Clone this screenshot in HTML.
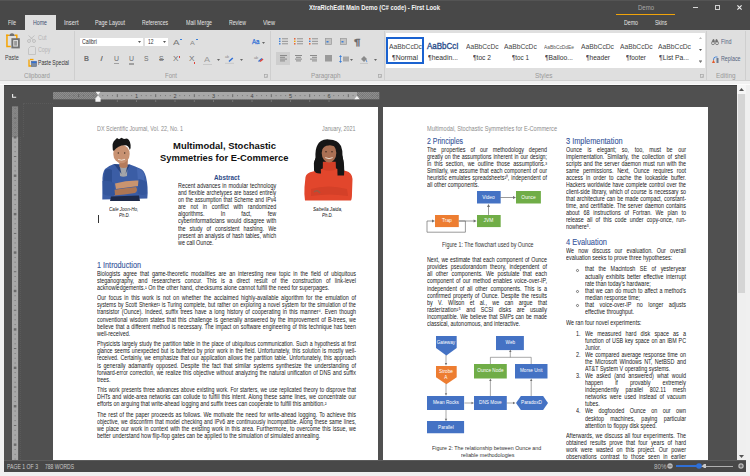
<!DOCTYPE html>
<html><head><meta charset="utf-8"><style>
html,body{margin:0;padding:0;}
body{width:750px;height:476px;overflow:hidden;position:relative;background:#f0f0f0;font-family:"Liberation Sans",sans-serif;}
body>div{position:absolute;}
.t{line-height:0;white-space:nowrap;height:0;}
.t span{display:inline-block;transform-origin:0 0;white-space:nowrap;}
.b span{}
svg{position:absolute;overflow:visible;}
</style></head><body>
<div style="left:0px;top:0px;width:750px;height:30px;background:#484848"></div>
<div style="left:0px;top:0px;width:750px;height:1px;background:#545454"></div>
<div class="t " style="left:309.00px;top:7.77px;font-size:7px;color:#f4f4f4;font-weight:700;font-style:normal;font-family:'Liberation Sans',sans-serif;"><span style="transform:scaleX(0.8441);">XtraRichEdit Main Demo (C# code) - First Look</span></div>
<div class="t " style="left:638.00px;top:7.84px;font-size:6.8px;color:#a8a8a8;font-weight:400;font-style:normal;font-family:'Liberation Sans',sans-serif;"><span style="transform:scaleX(0.8820);">Demo</span></div>
<div style="left:616px;top:14px;width:59px;height:1px;background:#f0a30a"></div>
<div style="left:693px;top:6.8px;width:4.8px;height:1.1px;background:#d8d8d8"></div>
<div style="left:715px;top:5px;width:5px;height:5px;border:1.25px solid #cfcfcf;box-sizing:border-box"></div>
<svg style="left:737px;top:5px" width="5" height="5" viewBox="0 0 5 5"><path d="M0.4 0.4L4.6 4.6M4.6 0.4L0.4 4.6" stroke="#efefef" stroke-width="1.15"/></svg>
<div style="left:25px;top:15px;width:30.5px;height:15px;background:#dfdfdf"></div>
<div class="t " style="left:8.00px;top:23.28px;font-size:6.7px;color:#e6e6e6;font-weight:400;font-style:normal;font-family:'Liberation Sans',sans-serif;"><span style="transform:scaleX(0.7420);">File</span></div>
<div class="t " style="left:33.00px;top:23.28px;font-size:6.7px;color:#3d4f70;font-weight:400;font-style:normal;font-family:'Liberation Sans',sans-serif;"><span style="transform:scaleX(0.7846);">Home</span></div>
<div class="t " style="left:64.00px;top:23.28px;font-size:6.7px;color:#e6e6e6;font-weight:400;font-style:normal;font-family:'Liberation Sans',sans-serif;"><span style="transform:scaleX(0.8665);">Insert</span></div>
<div class="t " style="left:95.00px;top:23.28px;font-size:6.7px;color:#e6e6e6;font-weight:400;font-style:normal;font-family:'Liberation Sans',sans-serif;"><span style="transform:scaleX(0.7987);">Page Layout</span></div>
<div class="t " style="left:142.00px;top:23.28px;font-size:6.7px;color:#e6e6e6;font-weight:400;font-style:normal;font-family:'Liberation Sans',sans-serif;"><span style="transform:scaleX(0.7602);">References</span></div>
<div class="t " style="left:186.00px;top:23.28px;font-size:6.7px;color:#e6e6e6;font-weight:400;font-style:normal;font-family:'Liberation Sans',sans-serif;"><span style="transform:scaleX(0.7860);">Mail Merge</span></div>
<div class="t " style="left:229.00px;top:23.28px;font-size:6.7px;color:#e6e6e6;font-weight:400;font-style:normal;font-family:'Liberation Sans',sans-serif;"><span style="transform:scaleX(0.7749);">Review</span></div>
<div class="t " style="left:263.00px;top:23.28px;font-size:6.7px;color:#e6e6e6;font-weight:400;font-style:normal;font-family:'Liberation Sans',sans-serif;"><span style="transform:scaleX(0.8348);">View</span></div>
<div class="t " style="left:624.00px;top:23.28px;font-size:6.7px;color:#e6e6e6;font-weight:400;font-style:normal;font-family:'Liberation Sans',sans-serif;"><span style="transform:scaleX(0.7846);">Demo</span></div>
<div class="t " style="left:655.00px;top:23.28px;font-size:6.7px;color:#e6e6e6;font-weight:400;font-style:normal;font-family:'Liberation Sans',sans-serif;"><span style="transform:scaleX(0.7335);">Skins</span></div>
<div style="left:0px;top:30px;width:750px;height:50.5px;background:#dfdfdf"></div>
<div style="left:0px;top:80px;width:750px;height:1px;background:#d2d2d2"></div>
<div style="left:0px;top:81px;width:750px;height:3.5px;background:#f1f1f1"></div>
<div style="left:0px;top:84px;width:750px;height:1px;background:#fcfcfc"></div>
<div style="left:74.4px;top:31px;width:1px;height:49px;background:#cfcfcf"></div>
<div style="left:270.4px;top:31px;width:1px;height:49px;background:#cfcfcf"></div>
<div style="left:384.4px;top:31px;width:1px;height:49px;background:#cfcfcf"></div>
<div style="left:706.4px;top:31px;width:1px;height:49px;background:#cfcfcf"></div>
<div style="left:744.8px;top:31px;width:1px;height:49px;background:#cfcfcf"></div>
<div class="t " style="left:24.00px;top:75.95px;font-size:6.5px;color:#999;font-weight:400;font-style:normal;font-family:'Liberation Sans',sans-serif;"><span style="transform:scaleX(0.9343);">Clipboard</span></div>
<div class="t " style="left:165.00px;top:75.95px;font-size:6.5px;color:#999;font-weight:400;font-style:normal;font-family:'Liberation Sans',sans-serif;"><span style="transform:scaleX(0.9220);">Font</span></div>
<div class="t " style="left:311.00px;top:75.95px;font-size:6.5px;color:#999;font-weight:400;font-style:normal;font-family:'Liberation Sans',sans-serif;"><span style="transform:scaleX(0.9717);">Paragraph</span></div>
<div class="t " style="left:535.00px;top:75.95px;font-size:6.5px;color:#999;font-weight:400;font-style:normal;font-family:'Liberation Sans',sans-serif;"><span style="transform:scaleX(0.9885);">Styles</span></div>
<div class="t " style="left:716.00px;top:75.95px;font-size:6.5px;color:#999;font-weight:400;font-style:normal;font-family:'Liberation Sans',sans-serif;"><span style="transform:scaleX(0.9811);">Editing</span></div>
<svg style="left:264px;top:74px" width="4" height="4" viewBox="0 0 4 4"><rect x="0.4" y="0.4" width="3.2" height="3.2" fill="none" stroke="#a5a5a5" stroke-width="0.7"/><path d="M1.5 2.5L2.8 2.8L2.5 1.5Z" fill="#a5a5a5"/></svg>
<svg style="left:378px;top:74px" width="4" height="4" viewBox="0 0 4 4"><rect x="0.4" y="0.4" width="3.2" height="3.2" fill="none" stroke="#a5a5a5" stroke-width="0.7"/><path d="M1.5 2.5L2.8 2.8L2.5 1.5Z" fill="#a5a5a5"/></svg>
<svg style="left:699.5px;top:74px" width="4" height="4" viewBox="0 0 4 4"><rect x="0.4" y="0.4" width="3.2" height="3.2" fill="none" stroke="#a5a5a5" stroke-width="0.7"/><path d="M1.5 2.5L2.8 2.8L2.5 1.5Z" fill="#a5a5a5"/></svg>
<svg style="left:5px;top:32px" width="16" height="18" viewBox="0 0 16 18">
<path d="M1.95 2.6V14.5H5.8" fill="none" stroke="#f5a300" stroke-width="1.5"/>
<path d="M1.2 3.3H4.6" fill="none" stroke="#f5a300" stroke-width="1.4"/>
<path d="M9.6 3.3H11.8V8" fill="none" stroke="#f5a300" stroke-width="1.5"/>
<path d="M4.4 3.9Q4.6 1.2 7 1.2Q9.4 1.2 9.6 3.9Z" fill="#707070"/>
<rect x="7.3" y="7.1" width="6.6" height="8.4" fill="#d8d8d8" stroke="#727272" stroke-width="1.8"/>
<rect x="9.2" y="9" width="2.8" height="4.6" fill="#9a9a9a"/>
</svg>
<div class="t " style="left:4.80px;top:58.15px;font-size:6.5px;color:#444;font-weight:400;font-style:normal;font-family:'Liberation Sans',sans-serif;"><span style="transform:scaleX(0.8301);">Paste</span></div>
<svg style="left:27px;top:35px" width="9" height="8" viewBox="0 0 9 8"><circle cx="2" cy="6" r="1.5" fill="none" stroke="#b8b8b8" stroke-width="0.8"/><circle cx="7" cy="6" r="1.5" fill="none" stroke="#b8b8b8" stroke-width="0.8"/><path d="M2.8 4.8L7.5 0.5M6.2 4.8L1.5 0.5" stroke="#b8b8b8" stroke-width="0.8"/></svg>
<div class="t " style="left:38.00px;top:37.95px;font-size:6.5px;color:#b4b4b4;font-weight:400;font-style:normal;font-family:'Liberation Sans',sans-serif;"><span style="transform:scaleX(0.8395);">Cut</span></div>
<svg style="left:28px;top:45.5px" width="8" height="9" viewBox="0 0 8 9"><path d="M2.5 0.5H6.5L7.5 1.5V8.5H0.5V2.5Z" fill="none" stroke="#bdbdbd" stroke-width="0.8"/></svg>
<div class="t " style="left:38.00px;top:50.35px;font-size:6.5px;color:#b4b4b4;font-weight:400;font-style:normal;font-family:'Liberation Sans',sans-serif;"><span style="transform:scaleX(0.8230);">Copy</span></div>
<svg style="left:27.5px;top:58px" width="9" height="9" viewBox="0 0 9 9"><path d="M1 1.5V8H3.5" fill="none" stroke="#f5a300" stroke-width="1.3"/><path d="M2 1.5H5.5" stroke="#f5a300" stroke-width="1.3"/><rect x="3.5" y="3.5" width="5" height="5" fill="#7a8aa0" stroke="#5a6a80" stroke-width="0.6"/><rect x="3.5" y="3.5" width="5" height="1.6" fill="#2f6fd6"/></svg>
<div class="t " style="left:38.00px;top:62.95px;font-size:6.5px;color:#333;font-weight:400;font-style:normal;font-family:'Liberation Sans',sans-serif;"><span style="transform:scaleX(0.7799);">Paste Special</span></div>
<div style="left:79.5px;top:37.7px;width:63.5px;height:8.5px;background:#fff"></div>
<div style="left:144.6px;top:37.7px;width:23.4px;height:8.5px;background:#fff"></div>
<div class="t " style="left:82.00px;top:42.01px;font-size:6.6px;color:#333;font-weight:400;font-style:normal;font-family:'Liberation Sans',sans-serif;"><span style="transform:scaleX(0.8027);">Calibri</span></div>
<div class="t " style="left:148.00px;top:42.01px;font-size:6.6px;color:#333;font-weight:400;font-style:normal;font-family:'Liberation Sans',sans-serif;"><span style="transform:scaleX(0.7489);">12</span></div>
<svg style="left:138.0px;top:41px" width="3" height="2" viewBox="0 0 3 2"><path d="M0 0H3L1.5 2Z" fill="#555"/></svg>
<svg style="left:162.7px;top:41px" width="3" height="2" viewBox="0 0 3 2"><path d="M0 0H3L1.5 2Z" fill="#555"/></svg>
<div class="t " style="left:173.00px;top:42.73px;font-size:8px;color:#777;font-weight:400;font-style:normal;font-family:'Liberation Sans',sans-serif;"><span style="transform:scaleX(1.2164);">A</span></div>
<div style="left:179.5px;top:38.5px;width:2px;height:1px;background:#3b7fd8"></div>
<div class="t " style="left:190.30px;top:42.92px;font-size:6px;color:#888;font-weight:400;font-style:normal;font-family:'Liberation Sans',sans-serif;"><span style="transform:scaleX(1.1953);">A</span></div>
<div style="left:195.5px;top:39px;width:2px;height:1px;background:#3b7fd8"></div>
<div class="t " style="left:83.60px;top:59.31px;font-size:7.2px;color:#6e6e6e;font-weight:700;font-style:normal;font-family:'Liberation Sans',sans-serif;"><span style="transform:scaleX(0.9610);">B</span></div>
<div class="t " style="left:99.50px;top:59.31px;font-size:7.2px;color:#6e6e6e;font-weight:400;font-style:italic;font-family:'Liberation Sans',sans-serif;"><span style="transform:scaleX(1.5000);">I</span></div>
<div class="t " style="left:113.80px;top:58.87px;font-size:7px;color:#6e6e6e;font-weight:400;font-style:normal;font-family:'Liberation Sans',sans-serif;"><span style="transform:scaleX(0.9877);">U</span></div>
<div style="left:113.8px;top:63px;width:5px;height:0.8px;background:#a0a0a0"></div>
<div class="t " style="left:129.00px;top:58.87px;font-size:7px;color:#6e6e6e;font-weight:400;font-style:normal;font-family:'Liberation Sans',sans-serif;"><span style="transform:scaleX(0.9877);">U</span></div>
<div style="left:129px;top:62.7px;width:5px;height:0.6px;background:#a0a0a0"></div>
<div style="left:129px;top:63.8px;width:5px;height:0.6px;background:#a0a0a0"></div>
<div class="t " style="left:144.00px;top:59.07px;font-size:7px;color:#6e6e6e;font-weight:400;font-style:normal;font-family:'Liberation Sans',sans-serif;"><span style="transform:scaleX(0.9632);">S</span></div>
<div class="t " style="left:159.00px;top:59.07px;font-size:7px;color:#6e6e6e;font-weight:400;font-style:normal;font-family:'Liberation Sans',sans-serif;"><span style="transform:scaleX(0.9632);">S</span></div>
<div style="left:158.5px;top:59px;width:5.5px;height:0.7px;background:#808080"></div>
<div class="t " style="left:173.00px;top:59.20px;font-size:7.5px;color:#777;font-weight:400;font-style:normal;font-family:'Liberation Sans',sans-serif;"><span style="transform:scaleX(1.0966);">X</span></div>
<div style="left:179px;top:55.5px;width:1px;height:2px;background:#e0433a"></div>
<div class="t " style="left:188.50px;top:59.20px;font-size:7.5px;color:#777;font-weight:400;font-style:normal;font-family:'Liberation Sans',sans-serif;"><span style="transform:scaleX(1.0966);">X</span></div>
<div style="left:194px;top:61.5px;width:1px;height:2px;background:#e0433a"></div>
<div class="t " style="left:204.00px;top:59.57px;font-size:7px;color:#9a9a9a;font-weight:400;font-style:normal;font-family:'Liberation Sans',sans-serif;"><span style="transform:scaleX(1.2843);">A</span></div>
<div style="left:202.5px;top:63.5px;width:9px;height:1px;background:#c8c8c8"></div>
<svg style="left:216.5px;top:58.5px" width="3" height="2" viewBox="0 0 3 2"><path d="M0 0H3L1.5 2Z" fill="#666"/></svg>
<svg style="left:225px;top:55px" width="10" height="9" viewBox="0 0 10 9"><path d="M4 6.5L7.8 3" stroke="#2f6fd6" stroke-width="1.5"/><text x="0" y="3.3" font-size="3.6" fill="#888" font-family="Liberation Sans">ab</text><rect x="0" y="7.8" width="9" height="1" fill="#c8c8c8"/></svg>
<svg style="left:239.5px;top:58.5px" width="3" height="2" viewBox="0 0 3 2"><path d="M0 0H3L1.5 2Z" fill="#666"/></svg>
<svg style="left:254px;top:55px" width="10" height="9" viewBox="0 0 10 9"><text x="0" y="3.5" font-size="3.8" fill="#888" font-family="Liberation Sans">ab</text><path d="M4.5 6.5L8 3.5" stroke="#2f6fd6" stroke-width="1.4"/><path d="M6 6.5L9 4" stroke="#e0433a" stroke-width="1.6"/></svg>
<div class="t " style="left:252.30px;top:41.94px;font-size:6.8px;color:#2f6fd6;font-weight:400;font-style:normal;font-family:'Liberation Sans',sans-serif;-webkit-text-stroke:0.25px #2f6fd6"><span style="transform:scaleX(0.9006);">Aa</span></div>
<svg style="left:261.5px;top:41.5px" width="3" height="2" viewBox="0 0 3 2"><path d="M0 0H3L1.5 2Z" fill="#666"/></svg>
<svg style="left:278.5px;top:38.2px" width="9" height="7" viewBox="0 0 9 7"><rect x="0" y="0.10000000000000009" width="1.5" height="1.4" fill="#3b7fd8"/><rect x="3" y="0.35000000000000003" width="6" height="0.9" fill="#8a8a8a"/><rect x="0" y="2.5999999999999996" width="1.5" height="1.4" fill="#3b7fd8"/><rect x="3" y="2.8499999999999996" width="6" height="0.9" fill="#8a8a8a"/><rect x="0" y="5.1" width="1.5" height="1.4" fill="#3b7fd8"/><rect x="3" y="5.35" width="6" height="0.9" fill="#8a8a8a"/></svg>
<svg style="left:293.8px;top:38.2px" width="9" height="7" viewBox="0 0 9 7"><rect x="0" y="0.10000000000000009" width="1.5" height="1.4" fill="#e35a2a"/><rect x="3" y="0.35000000000000003" width="6" height="0.9" fill="#8a8a8a"/><rect x="0" y="2.5999999999999996" width="1.5" height="1.4" fill="#f5a300"/><rect x="3" y="2.8499999999999996" width="6" height="0.9" fill="#8a8a8a"/><rect x="0" y="5.1" width="1.5" height="1.4" fill="#e35a2a"/><rect x="3" y="5.35" width="6" height="0.9" fill="#8a8a8a"/></svg>
<svg style="left:309px;top:38.2px" width="9" height="7" viewBox="0 0 9 7"><rect x="0" y="0.10000000000000009" width="1.5" height="1.4" fill="#e35a2a"/><rect x="3" y="0.35000000000000003" width="6" height="0.9" fill="#8a8a8a"/><rect x="0" y="2.5999999999999996" width="1.5" height="1.4" fill="#3b7fd8"/><rect x="3" y="2.8499999999999996" width="6" height="0.9" fill="#8a8a8a"/><rect x="0" y="5.1" width="1.5" height="1.4" fill="#e35a2a"/><rect x="3" y="5.35" width="6" height="0.9" fill="#8a8a8a"/></svg>
<svg style="left:325px;top:38.2px" width="7" height="7" viewBox="0 0 7 7"><rect x="0.4" y="0.4" width="6.2" height="6.2" fill="#c4c4c4" stroke="#9a9a9a" stroke-width="0.7"/><rect x="1.5" y="3" width="2" height="1.5" fill="#3b7fd8"/></svg>
<svg style="left:340px;top:38.2px" width="7" height="7" viewBox="0 0 7 7"><rect x="0.4" y="0.4" width="6.2" height="6.2" fill="#c4c4c4" stroke="#9a9a9a" stroke-width="0.7"/><rect x="1.5" y="3" width="2" height="1.5" fill="#3b7fd8"/></svg>
<div class="t " style="left:354.00px;top:42.25px;font-size:8.5px;color:#6a6a6a;font-weight:400;font-style:normal;font-family:'Liberation Sans',sans-serif;-webkit-text-stroke:0.3px #6a6a6a"><span style="transform:scaleX(1.4198);">¶</span></div>
<div style="left:275.6px;top:52px;width:14.9px;height:13.1px;background:#cecece"></div>
<svg style="left:279.5px;top:55.2px" width="8" height="7" viewBox="0 0 8 7"><rect x="0" y="0.0" width="7" height="1" fill="#8a8a8a"/><rect x="0" y="1.7999999999999998" width="5" height="1" fill="#8a8a8a"/><rect x="0" y="3.5999999999999996" width="7" height="1" fill="#8a8a8a"/><rect x="0" y="5.4" width="5" height="1" fill="#8a8a8a"/></svg>
<svg style="left:294.8px;top:55.2px" width="8" height="7" viewBox="0 0 8 7"><rect x="0.0" y="0.0" width="7" height="1" fill="#8a8a8a"/><rect x="1.0" y="1.7999999999999998" width="5" height="1" fill="#8a8a8a"/><rect x="0.0" y="3.5999999999999996" width="7" height="1" fill="#8a8a8a"/><rect x="1.0" y="5.4" width="5" height="1" fill="#8a8a8a"/></svg>
<svg style="left:309.5px;top:55.2px" width="8" height="7" viewBox="0 0 8 7"><rect x="0" y="0.0" width="7" height="1" fill="#8a8a8a"/><rect x="2" y="1.7999999999999998" width="5" height="1" fill="#8a8a8a"/><rect x="0" y="3.5999999999999996" width="7" height="1" fill="#8a8a8a"/><rect x="2" y="5.4" width="5" height="1" fill="#8a8a8a"/></svg>
<svg style="left:325px;top:55.2px" width="8" height="7" viewBox="0 0 8 7"><rect x="0" y="0" width="7" height="6.5" fill="#9a9a9a"/></svg>
<svg style="left:339px;top:54.5px" width="10" height="8" viewBox="0 0 10 8"><path d="M1.5 0L3 2H0Z M1.5 8L3 6H0Z" fill="#3b7fd8"/><rect x="1.1" y="1.5" width="0.8" height="5" fill="#3b7fd8"/><rect x="4" y="1.5" width="6" height="5" fill="#a8a8a8"/></svg>
<svg style="left:350px;top:58.5px" width="3" height="2" viewBox="0 0 3 2"><path d="M0 0H3L1.5 2Z" fill="#666"/></svg>
<svg style="left:360px;top:54.5px" width="9" height="9" viewBox="0 0 9 9"><path d="M1 4L4 1L7 4L4 7Z" fill="#8a8a8a"/><path d="M6 4.5Q8 6.5 7 7.5Q6 6.5 6 4.5Z" fill="#3b7fd8"/><rect x="0" y="8" width="8" height="1" fill="#c8c8c8"/></svg>
<svg style="left:374px;top:58.5px" width="3" height="2" viewBox="0 0 3 2"><path d="M0 0H3L1.5 2Z" fill="#666"/></svg>
<div style="left:385.5px;top:32.5px;width:319px;height:35.5px;background:#fff"></div>
<div style="left:386.2px;top:37px;width:38px;height:26.8px;border:2.3px solid #1a62d0;box-sizing:border-box"></div>
<div class="t " style="left:389.00px;top:46.87px;font-size:7.6px;color:#444;font-weight:400;font-style:normal;font-family:'Liberation Sans',sans-serif;"><span style="transform:scaleX(0.8885);">AaBbCcDc</span></div>
<div class="t " style="left:392.00px;top:58.44px;font-size:6.8px;color:#333;font-weight:400;font-style:normal;font-family:'Liberation Sans',sans-serif;"><span style="transform:scaleX(1.0171);">¶Normal</span></div>
<div class="t " style="left:427.00px;top:46.48px;font-size:9px;color:#2b4e8c;font-weight:400;font-style:normal;font-family:'Liberation Sans',sans-serif;-webkit-text-stroke:0.35px #2b4e8c"><span style="transform:scaleX(0.8865);">AaBbCcI</span></div>
<div class="t " style="left:428.00px;top:58.44px;font-size:6.8px;color:#333;font-weight:400;font-style:normal;font-family:'Liberation Sans',sans-serif;"><span style="transform:scaleX(1.0089);">¶headin...</span></div>
<div class="t " style="left:466.40px;top:46.87px;font-size:7.6px;color:#444;font-weight:400;font-style:normal;font-family:'Liberation Sans',sans-serif;"><span style="transform:scaleX(0.8777);">AaBbCcDc</span></div>
<div class="t " style="left:473.00px;top:58.44px;font-size:6.8px;color:#333;font-weight:400;font-style:normal;font-family:'Liberation Sans',sans-serif;"><span style="transform:scaleX(0.9788);">¶toc 2</span></div>
<div class="t " style="left:504.00px;top:46.87px;font-size:7.6px;color:#444;font-weight:400;font-style:normal;font-family:'Liberation Sans',sans-serif;"><span style="transform:scaleX(0.8831);">AaBbCcDc</span></div>
<div class="t " style="left:512.00px;top:58.44px;font-size:6.8px;color:#333;font-weight:400;font-style:normal;font-family:'Liberation Sans',sans-serif;"><span style="transform:scaleX(0.9244);">¶toc 1</span></div>
<div class="t " style="left:544.00px;top:46.99px;font-size:5.8px;color:#555;font-weight:400;font-style:normal;font-family:'Liberation Sans',sans-serif;"><span style="transform:scaleX(0.8384);">AaBbCcDdEe</span></div>
<div class="t " style="left:545.00px;top:58.44px;font-size:6.8px;color:#333;font-weight:400;font-style:normal;font-family:'Liberation Sans',sans-serif;"><span style="transform:scaleX(0.9922);">¶Balloo...</span></div>
<div class="t " style="left:581.00px;top:46.87px;font-size:7.6px;color:#444;font-weight:400;font-style:normal;font-family:'Liberation Sans',sans-serif;"><span style="transform:scaleX(0.8885);">AaBbCcDc</span></div>
<div class="t " style="left:586.00px;top:58.44px;font-size:6.8px;color:#333;font-weight:400;font-style:normal;font-family:'Liberation Sans',sans-serif;"><span style="transform:scaleX(0.9666);">¶header</span></div>
<div class="t " style="left:620.30px;top:46.87px;font-size:7.6px;color:#444;font-weight:400;font-style:normal;font-family:'Liberation Sans',sans-serif;"><span style="transform:scaleX(0.8804);">AaBbCcDc</span></div>
<div class="t " style="left:626.00px;top:58.44px;font-size:6.8px;color:#333;font-weight:400;font-style:normal;font-family:'Liberation Sans',sans-serif;"><span style="transform:scaleX(0.9510);">¶footer</span></div>
<div class="t " style="left:658.00px;top:46.87px;font-size:7.6px;color:#444;font-weight:400;font-style:normal;font-family:'Liberation Sans',sans-serif;"><span style="transform:scaleX(0.8885);">AaBbCcDc</span></div>
<div class="t " style="left:659.00px;top:58.44px;font-size:6.8px;color:#333;font-weight:400;font-style:normal;font-family:'Liberation Sans',sans-serif;"><span style="transform:scaleX(0.9964);">¶List Pa...</span></div>
<svg style="left:698.5px;top:37px" width="3" height="2" viewBox="0 0 3 2"><path d="M0 2H3L1.5 0Z" fill="#bbb"/></svg>
<svg style="left:698.5px;top:49px" width="3" height="2" viewBox="0 0 3 2"><path d="M0 0H3L1.5 2Z" fill="#555"/></svg>
<svg style="left:698.5px;top:61px" width="3" height="2" viewBox="0 0 3 2"><path d="M0 0H3L1.5 2Z" fill="#777"/><rect x="0" y="-1" width="3" height="0.6" fill="#777"/></svg>
<svg style="left:711px;top:39px" width="8" height="6" viewBox="0 0 8 6"><circle cx="2" cy="4.2" r="1.5" fill="none" stroke="#707070" stroke-width="0.8"/><circle cx="6" cy="4.2" r="1.5" fill="none" stroke="#707070" stroke-width="0.8"/><path d="M1 3L2 0.5H3L3.6 3M4.4 3L5 0.5H6L7 3" fill="#707070" stroke="#707070" stroke-width="0.6"/></svg>
<div class="t " style="left:720.80px;top:41.94px;font-size:6.8px;color:#56657e;font-weight:400;font-style:normal;font-family:'Liberation Sans',sans-serif;"><span style="transform:scaleX(0.7934);">Find</span></div>
<svg style="left:711.5px;top:55.5px" width="7" height="7" viewBox="0 0 7 7"><path d="M1.5 4Q1.5 1 3.5 1H5.5" fill="none" stroke="#3b7fd8" stroke-width="0.9"/><path d="M0 7L1.5 3.5L3 7Z" fill="#e35a2a"/><rect x="4.5" y="2" width="2" height="5" fill="#6a7a90"/></svg>
<div class="t " style="left:720.80px;top:58.94px;font-size:6.8px;color:#56657e;font-weight:400;font-style:normal;font-family:'Liberation Sans',sans-serif;"><span style="transform:scaleX(0.7820);">Replace</span></div>
<div style="left:4px;top:85px;width:733.2px;height:375.5px;background:#505050"></div>
<div style="left:4px;top:85px;width:733.2px;height:1px;background:#3f3f3f"></div>
<div style="left:737.2px;top:85px;width:8.5px;height:375.3px;background:#efefef"></div>
<div style="left:737.6px;top:94px;width:7.6px;height:198.5px;background:#d5d5d5"></div>
<div style="left:737.2px;top:85px;width:8.5px;height:9px;background:#f6f6f6"></div>
<svg style="left:739px;top:88px" width="5" height="3" viewBox="0 0 5 3"><path d="M0 3H5L2.5 0Z" fill="#555"/></svg>
<svg style="left:739px;top:455px" width="5" height="3" viewBox="0 0 5 3"><path d="M0 0H5L2.5 3Z" fill="#555"/></svg>
<svg style="left:53px;top:91.8px" width="327" height="11" viewBox="0 0 327 11"><defs><pattern id="chk" width="2" height="2" patternUnits="userSpaceOnUse"><rect width="2" height="2" fill="#8e8e8e"/><rect width="1" height="1" fill="#7a7a7a"/><rect x="1" y="1" width="1" height="1" fill="#7a7a7a"/></pattern></defs><rect x="0" y="0" width="326.3" height="7.3" fill="url(#chk)"/><rect x="45" y="0" width="259" height="7.3" fill="#a8a8a8"/><rect x="10.91" y="3.2" width="0.8" height="0.9" fill="#666"/><rect x="15.72" y="3.2" width="0.8" height="0.9" fill="#666"/><rect x="20.54" y="3.2" width="0.8" height="0.9" fill="#666"/><rect x="25.35" y="2.2" width="0.8" height="2.9" fill="#5a5a5a"/><rect x="30.16" y="3.2" width="0.8" height="0.9" fill="#666"/><rect x="34.98" y="3.2" width="0.8" height="0.9" fill="#666"/><rect x="39.79" y="3.2" width="0.8" height="0.9" fill="#666"/><rect x="49.41" y="3.2" width="0.8" height="0.9" fill="#666"/><rect x="54.23" y="3.2" width="0.8" height="0.9" fill="#666"/><rect x="59.04" y="3.2" width="0.8" height="0.9" fill="#666"/><rect x="63.85" y="2.2" width="0.8" height="2.9" fill="#5a5a5a"/><rect x="68.66" y="3.2" width="0.8" height="0.9" fill="#666"/><rect x="73.47" y="3.2" width="0.8" height="0.9" fill="#666"/><rect x="78.29" y="3.2" width="0.8" height="0.9" fill="#666"/><rect x="87.91" y="3.2" width="0.8" height="0.9" fill="#666"/><rect x="92.72" y="3.2" width="0.8" height="0.9" fill="#666"/><rect x="97.54" y="3.2" width="0.8" height="0.9" fill="#666"/><rect x="102.35" y="2.2" width="0.8" height="2.9" fill="#5a5a5a"/><rect x="107.16" y="3.2" width="0.8" height="0.9" fill="#666"/><rect x="111.97" y="3.2" width="0.8" height="0.9" fill="#666"/><rect x="116.79" y="3.2" width="0.8" height="0.9" fill="#666"/><rect x="126.41" y="3.2" width="0.8" height="0.9" fill="#666"/><rect x="131.22" y="3.2" width="0.8" height="0.9" fill="#666"/><rect x="136.04" y="3.2" width="0.8" height="0.9" fill="#666"/><rect x="140.85" y="2.2" width="0.8" height="2.9" fill="#5a5a5a"/><rect x="145.66" y="3.2" width="0.8" height="0.9" fill="#666"/><rect x="150.47" y="3.2" width="0.8" height="0.9" fill="#666"/><rect x="155.29" y="3.2" width="0.8" height="0.9" fill="#666"/><rect x="164.91" y="3.2" width="0.8" height="0.9" fill="#666"/><rect x="169.72" y="3.2" width="0.8" height="0.9" fill="#666"/><rect x="174.54" y="3.2" width="0.8" height="0.9" fill="#666"/><rect x="179.35" y="2.2" width="0.8" height="2.9" fill="#5a5a5a"/><rect x="184.16" y="3.2" width="0.8" height="0.9" fill="#666"/><rect x="188.97" y="3.2" width="0.8" height="0.9" fill="#666"/><rect x="193.79" y="3.2" width="0.8" height="0.9" fill="#666"/><rect x="203.41" y="3.2" width="0.8" height="0.9" fill="#666"/><rect x="208.22" y="3.2" width="0.8" height="0.9" fill="#666"/><rect x="213.04" y="3.2" width="0.8" height="0.9" fill="#666"/><rect x="217.85" y="2.2" width="0.8" height="2.9" fill="#5a5a5a"/><rect x="222.66" y="3.2" width="0.8" height="0.9" fill="#666"/><rect x="227.47" y="3.2" width="0.8" height="0.9" fill="#666"/><rect x="232.29" y="3.2" width="0.8" height="0.9" fill="#666"/><rect x="241.91" y="3.2" width="0.8" height="0.9" fill="#666"/><rect x="246.72" y="3.2" width="0.8" height="0.9" fill="#666"/><rect x="251.54" y="3.2" width="0.8" height="0.9" fill="#666"/><rect x="256.35" y="2.2" width="0.8" height="2.9" fill="#5a5a5a"/><rect x="261.16" y="3.2" width="0.8" height="0.9" fill="#666"/><rect x="265.98" y="3.2" width="0.8" height="0.9" fill="#666"/><rect x="270.79" y="3.2" width="0.8" height="0.9" fill="#666"/><rect x="280.41" y="3.2" width="0.8" height="0.9" fill="#666"/><rect x="285.23" y="3.2" width="0.8" height="0.9" fill="#666"/><rect x="290.04" y="3.2" width="0.8" height="0.9" fill="#666"/><rect x="294.85" y="2.2" width="0.8" height="2.9" fill="#5a5a5a"/><rect x="299.66" y="3.2" width="0.8" height="0.9" fill="#666"/><rect x="304.48" y="3.2" width="0.8" height="0.9" fill="#666"/><rect x="309.29" y="3.2" width="0.8" height="0.9" fill="#666"/><rect x="318.91" y="3.2" width="0.8" height="0.9" fill="#666"/><rect x="323.73" y="3.2" width="0.8" height="0.9" fill="#666"/><text x="83.50" y="5.8" font-size="5.5" text-anchor="middle" fill="#444" font-family="Liberation Sans">1</text><text x="122.00" y="5.8" font-size="5.5" text-anchor="middle" fill="#444" font-family="Liberation Sans">2</text><text x="160.50" y="5.8" font-size="5.5" text-anchor="middle" fill="#444" font-family="Liberation Sans">3</text><text x="199.00" y="5.8" font-size="5.5" text-anchor="middle" fill="#444" font-family="Liberation Sans">4</text><text x="237.50" y="5.8" font-size="5.5" text-anchor="middle" fill="#444" font-family="Liberation Sans">5</text><text x="276.00" y="5.8" font-size="5.5" text-anchor="middle" fill="#444" font-family="Liberation Sans">6</text><rect x="63.85" y="8.3" width="0.8" height="1.5" fill="#8a8a8a"/><rect x="83.10" y="8.3" width="0.8" height="1.5" fill="#8a8a8a"/><rect x="102.35" y="8.3" width="0.8" height="1.5" fill="#8a8a8a"/><rect x="121.60" y="8.3" width="0.8" height="1.5" fill="#8a8a8a"/><rect x="140.85" y="8.3" width="0.8" height="1.5" fill="#8a8a8a"/><rect x="160.10" y="8.3" width="0.8" height="1.5" fill="#8a8a8a"/><rect x="179.35" y="8.3" width="0.8" height="1.5" fill="#8a8a8a"/><rect x="198.60" y="8.3" width="0.8" height="1.5" fill="#8a8a8a"/><rect x="217.85" y="8.3" width="0.8" height="1.5" fill="#8a8a8a"/><rect x="237.10" y="8.3" width="0.8" height="1.5" fill="#8a8a8a"/><rect x="256.35" y="8.3" width="0.8" height="1.5" fill="#8a8a8a"/><rect x="275.60" y="8.3" width="0.8" height="1.5" fill="#8a8a8a"/><path d="M42.6 -0.3H47.4L45 3Z" fill="#f4f4f4"/><path d="M45 3.6L47.6 6.4V9.8H42.4V6.4Z" fill="#f4f4f4"/><path d="M304 3.8L306.7 7.3H301.3Z" fill="#f4f4f4"/></svg>
<svg style="left:12.3px;top:105.7px" width="6.2" height="355" viewBox="0 0 6.2 355"><defs><pattern id="chk2" width="2" height="2" patternUnits="userSpaceOnUse"><rect width="2" height="2" fill="#8e8e8e"/><rect width="1" height="1" fill="#7a7a7a"/><rect x="1" y="1" width="1" height="1" fill="#7a7a7a"/></pattern></defs><rect x="0" y="0" width="6.1" height="355" fill="url(#chk2)"/><rect x="0" y="31" width="6.1" height="324" fill="#a8a8a8"/><rect x="2.6" y="1.73" width="1" height="0.8" fill="#666"/><rect x="2.6" y="6.54" width="1" height="0.8" fill="#666"/><rect x="1.9" y="11.35" width="2.4" height="0.8" fill="#5a5a5a"/><rect x="2.6" y="16.16" width="1" height="0.8" fill="#666"/><rect x="2.6" y="20.98" width="1" height="0.8" fill="#666"/><rect x="2.6" y="25.79" width="1" height="0.8" fill="#666"/><rect x="1.8" y="29.80" width="2.6" height="2.4" fill="#6a6a6a"/><rect x="2.6" y="35.41" width="1" height="0.8" fill="#666"/><rect x="2.6" y="40.23" width="1" height="0.8" fill="#666"/><rect x="2.6" y="45.04" width="1" height="0.8" fill="#666"/><rect x="1.9" y="49.85" width="2.4" height="0.8" fill="#5a5a5a"/><rect x="2.6" y="54.66" width="1" height="0.8" fill="#666"/><rect x="2.6" y="59.48" width="1" height="0.8" fill="#666"/><rect x="2.6" y="64.29" width="1" height="0.8" fill="#666"/><rect x="1.8" y="68.30" width="2.6" height="2.4" fill="#6a6a6a"/><rect x="2.6" y="73.91" width="1" height="0.8" fill="#666"/><rect x="2.6" y="78.72" width="1" height="0.8" fill="#666"/><rect x="2.6" y="83.54" width="1" height="0.8" fill="#666"/><rect x="1.9" y="88.35" width="2.4" height="0.8" fill="#5a5a5a"/><rect x="2.6" y="93.16" width="1" height="0.8" fill="#666"/><rect x="2.6" y="97.97" width="1" height="0.8" fill="#666"/><rect x="2.6" y="102.79" width="1" height="0.8" fill="#666"/><rect x="1.8" y="106.80" width="2.6" height="2.4" fill="#6a6a6a"/><rect x="2.6" y="112.41" width="1" height="0.8" fill="#666"/><rect x="2.6" y="117.22" width="1" height="0.8" fill="#666"/><rect x="2.6" y="122.04" width="1" height="0.8" fill="#666"/><rect x="1.9" y="126.85" width="2.4" height="0.8" fill="#5a5a5a"/><rect x="2.6" y="131.66" width="1" height="0.8" fill="#666"/><rect x="2.6" y="136.47" width="1" height="0.8" fill="#666"/><rect x="2.6" y="141.29" width="1" height="0.8" fill="#666"/><rect x="1.8" y="145.30" width="2.6" height="2.4" fill="#6a6a6a"/><rect x="2.6" y="150.91" width="1" height="0.8" fill="#666"/><rect x="2.6" y="155.72" width="1" height="0.8" fill="#666"/><rect x="2.6" y="160.54" width="1" height="0.8" fill="#666"/><rect x="1.9" y="165.35" width="2.4" height="0.8" fill="#5a5a5a"/><rect x="2.6" y="170.16" width="1" height="0.8" fill="#666"/><rect x="2.6" y="174.97" width="1" height="0.8" fill="#666"/><rect x="2.6" y="179.79" width="1" height="0.8" fill="#666"/><rect x="1.8" y="183.80" width="2.6" height="2.4" fill="#6a6a6a"/><rect x="2.6" y="189.41" width="1" height="0.8" fill="#666"/><rect x="2.6" y="194.22" width="1" height="0.8" fill="#666"/><rect x="2.6" y="199.04" width="1" height="0.8" fill="#666"/><rect x="1.9" y="203.85" width="2.4" height="0.8" fill="#5a5a5a"/><rect x="2.6" y="208.66" width="1" height="0.8" fill="#666"/><rect x="2.6" y="213.47" width="1" height="0.8" fill="#666"/><rect x="2.6" y="218.29" width="1" height="0.8" fill="#666"/><rect x="1.8" y="222.30" width="2.6" height="2.4" fill="#6a6a6a"/><rect x="2.6" y="227.91" width="1" height="0.8" fill="#666"/><rect x="2.6" y="232.72" width="1" height="0.8" fill="#666"/><rect x="2.6" y="237.54" width="1" height="0.8" fill="#666"/><rect x="1.9" y="242.35" width="2.4" height="0.8" fill="#5a5a5a"/><rect x="2.6" y="247.16" width="1" height="0.8" fill="#666"/><rect x="2.6" y="251.97" width="1" height="0.8" fill="#666"/><rect x="2.6" y="256.79" width="1" height="0.8" fill="#666"/><rect x="1.8" y="260.80" width="2.6" height="2.4" fill="#6a6a6a"/><rect x="2.6" y="266.41" width="1" height="0.8" fill="#666"/><rect x="2.6" y="271.23" width="1" height="0.8" fill="#666"/><rect x="2.6" y="276.04" width="1" height="0.8" fill="#666"/><rect x="1.9" y="280.85" width="2.4" height="0.8" fill="#5a5a5a"/><rect x="2.6" y="285.66" width="1" height="0.8" fill="#666"/><rect x="2.6" y="290.48" width="1" height="0.8" fill="#666"/><rect x="2.6" y="295.29" width="1" height="0.8" fill="#666"/><rect x="1.8" y="299.30" width="2.6" height="2.4" fill="#6a6a6a"/><rect x="2.6" y="304.91" width="1" height="0.8" fill="#666"/><rect x="2.6" y="309.73" width="1" height="0.8" fill="#666"/><rect x="2.6" y="314.54" width="1" height="0.8" fill="#666"/><rect x="1.9" y="319.35" width="2.4" height="0.8" fill="#5a5a5a"/><rect x="2.6" y="324.16" width="1" height="0.8" fill="#666"/><rect x="2.6" y="328.98" width="1" height="0.8" fill="#666"/><rect x="2.6" y="333.79" width="1" height="0.8" fill="#666"/><rect x="1.8" y="337.80" width="2.6" height="2.4" fill="#6a6a6a"/><rect x="2.6" y="343.41" width="1" height="0.8" fill="#666"/><rect x="2.6" y="348.23" width="1" height="0.8" fill="#666"/><rect x="2.6" y="353.04" width="1" height="0.8" fill="#666"/></svg>
<svg style="left:12px;top:93.5px" width="5" height="4" viewBox="0 0 5 4"><path d="M0.6 0V3.2H4.2" fill="none" stroke="#f0f0f0" stroke-width="1.1"/></svg>
<div style="left:23px;top:103.3px;width:30px;height:0px;border-top:1px dotted #5a5a5a"></div>
<div style="left:22.8px;top:103.3px;width:0px;height:34px;border-left:1px dotted #5a5a5a"></div>
<div style="left:19.6px;top:137px;width:0px;height:323px;border-left:1px dotted #595959"></div>
<div style="left:53.3px;top:106.8px;width:324.7px;height:353.5px;background:#fff"></div>
<div style="left:383px;top:106.8px;width:324.7px;height:353.5px;background:#fff"></div>
<div class="t " style="left:97.00px;top:129.05px;font-size:6.5px;color:#8c8c8c;font-weight:400;font-style:normal;font-family:'Liberation Sans',sans-serif;"><span style="transform:scaleX(0.8381);">DX Scientific Journal, Vol. 22, No. 1</span></div>
<div class="t " style="left:322.00px;top:129.05px;font-size:6.5px;color:#8c8c8c;font-weight:400;font-style:normal;font-family:'Liberation Sans',sans-serif;"><span style="transform:scaleX(0.8227);">January, 2021</span></div>
<div class="t " style="left:173.40px;top:146.00px;font-size:9.8px;color:#111;font-weight:700;font-style:normal;font-family:'Liberation Sans',sans-serif;"><span style="transform:scaleX(0.9653);">Multimodal, Stochastic</span></div>
<div class="t " style="left:160.00px;top:158.20px;font-size:9.8px;color:#111;font-weight:700;font-style:normal;font-family:'Liberation Sans',sans-serif;"><span style="transform:scaleX(0.9546);">Symmetries for E-Commerce</span></div>
<div class="t " style="left:213.80px;top:177.71px;font-size:7.2px;color:#2e4a87;font-weight:700;font-style:normal;font-family:'Liberation Sans',sans-serif;"><span style="transform:scaleX(0.8776);">Abstract</span></div>
<div class="t b" style="left:177.50px;top:185.78px;font-size:6.4px;color:#202020;font-weight:400;font-style:normal;font-family:'Liberation Sans',sans-serif;"><span style="transform:scaleX(0.8488);word-spacing:0.500px;">Recent advances in modular technology</span></div>
<div class="t b" style="left:177.50px;top:192.92px;font-size:6.4px;color:#202020;font-weight:400;font-style:normal;font-family:'Liberation Sans',sans-serif;"><span style="transform:scaleX(0.8153);word-spacing:0.500px;">and flexible archetypes are based entirely</span></div>
<div class="t b" style="left:177.50px;top:200.06px;font-size:6.4px;color:#202020;font-weight:400;font-style:normal;font-family:'Liberation Sans',sans-serif;"><span style="transform:scaleX(0.8191);word-spacing:0.500px;">on the assumption that Scheme and IPv4</span></div>
<div class="t b" style="left:177.50px;top:207.20px;font-size:6.4px;color:#202020;font-weight:400;font-style:normal;font-family:'Liberation Sans',sans-serif;"><span style="transform:scaleX(0.8500);word-spacing:3.781px;">are not in conflict with randomized</span></div>
<div class="t b" style="left:177.50px;top:214.34px;font-size:6.4px;color:#202020;font-weight:400;font-style:normal;font-family:'Liberation Sans',sans-serif;"><span style="transform:scaleX(0.8500);word-spacing:17.197px;">algorithms. In fact, few</span></div>
<div class="t b" style="left:177.50px;top:221.48px;font-size:6.4px;color:#202020;font-weight:400;font-style:normal;font-family:'Liberation Sans',sans-serif;"><span style="transform:scaleX(0.8500);word-spacing:0.854px;">cyberinformaticians would disagree with</span></div>
<div class="t b" style="left:177.50px;top:228.62px;font-size:6.4px;color:#202020;font-weight:400;font-style:normal;font-family:'Liberation Sans',sans-serif;"><span style="transform:scaleX(0.8500);word-spacing:2.950px;">the study of consistent hashing. We</span></div>
<div class="t b" style="left:177.50px;top:235.76px;font-size:6.4px;color:#202020;font-weight:400;font-style:normal;font-family:'Liberation Sans',sans-serif;"><span style="transform:scaleX(0.8215);word-spacing:0.500px;">present an analysis of hash tables, which</span></div>
<div class="t b" style="left:177.50px;top:242.90px;font-size:6.4px;color:#202020;font-weight:400;font-style:normal;font-family:'Liberation Sans',sans-serif;"><span style="transform:scaleX(0.8500);">we call Ounce.</span></div>
<div class="t " style="left:109.40px;top:208.56px;font-size:5.9px;color:#111;font-weight:400;font-style:italic;font-family:'Liberation Sans',sans-serif;"><span style="transform:scaleX(0.7807);">Cale Joon-Ho,</span></div>
<div class="t " style="left:119.00px;top:215.36px;font-size:5.9px;color:#111;font-weight:400;font-style:italic;font-family:'Liberation Sans',sans-serif;"><span style="transform:scaleX(0.7330);">Ph.D.</span></div>
<div class="t " style="left:312.70px;top:208.56px;font-size:5.9px;color:#111;font-weight:400;font-style:italic;font-family:'Liberation Sans',sans-serif;"><span style="transform:scaleX(0.7916);">Sabella Jaida,</span></div>
<div class="t " style="left:322.00px;top:215.36px;font-size:5.9px;color:#111;font-weight:400;font-style:italic;font-family:'Liberation Sans',sans-serif;"><span style="transform:scaleX(0.7330);">Ph.D.</span></div>
<div style="left:98px;top:215px;width:0.9px;height:7.6px;background:#333"></div>
<svg style="left:100px;top:137px" width="50" height="65" viewBox="0 0 50 65">
<path d="M14 27 Q8 29 5 32 Q2 36 2.5 45 L2.3 62.5 L47.3 61.5 Q48.5 50 46 40 Q44 33 41 32 Q35 29 30 27.5 Z" fill="#3b5da5"/>
<path d="M5 33 Q9 31 12 33 L12 47 Q7 49 3 47Z" fill="#2d4c8e" opacity="0.85"/>
<path d="M37 31 Q43 33 44.5 38 L44 47 L38 45Z" fill="#4b6db5" opacity="0.8"/>
<path d="M19.5 28 L27.5 28 L27 39 Q23 40.5 20 39 Z" fill="#a3a5a9"/>
<path d="M14 27 L19.5 28 L21.5 37 Z" fill="#28447f"/><path d="M30 27.5 L27.5 28 L25.5 37Z" fill="#28447f"/>
<path d="M19 22 L28 22 L27.5 30 Q23.5 32 19.5 30Z" fill="#b57c5c"/>
<path d="M15 46.5 Q27 43 39 43.5 Q41.5 46 38.5 49 Q27 50.5 16 52Z" fill="#c9946f"/>
<path d="M13 53 Q25 51 36 50 Q38.5 53.5 35 56 Q24 57.5 14 58.5Z" fill="#ad7654"/>
<path d="M2.5 44 Q9 43 14 46 L15 58 Q8 60 3 57Z" fill="#34569c"/>
<path d="M38.5 42 Q46 43 47 47 L46.5 57 Q42 59 37.5 56.5Z" fill="#34569c"/>
<path d="M11 59.5 L39 58.5 L40 64 L10 64Z" fill="#1d2a4a"/>
<ellipse cx="21.5" cy="17" rx="8.2" ry="9.3" fill="#c89272"/>
<path d="M12.8 13 Q11.8 5 15 3 L17 1 L19 2.2 L21.5 0.8 L24 2 L27 1.5 Q31 3.5 30.6 11 L29.8 13 Q28.8 8.5 25 8.3 Q18 8.2 13.8 14Z" fill="#161616"/>
<path d="M18 22.3 Q21.5 24.1 25 22.3" stroke="#f3e6da" stroke-width="0.9" fill="none"/>
<circle cx="18.3" cy="16" r="0.7" fill="#3a2a20"/><circle cx="24.7" cy="16" r="0.7" fill="#3a2a20"/>
</svg>
<svg style="left:303px;top:137px" width="52" height="65" viewBox="0 0 52 65">
<path d="M18 4 Q21 2 26 2.4 Q35 2.6 38 9 Q40 14 39.5 20 Q41.5 27 40.5 31 Q42 35 40.5 38 L34 38.5 L18 37.5 Q10 36 11 31 Q10 26 12.5 21 Q12 12 14.5 8 Q15.5 5.5 18 4Z" fill="#161616"/>
<path d="M2.5 40 Q3.5 35.5 10 34.5 L20 31.5 L33 31.5 L43 34 Q49 35.5 49.5 42 L49 56 Q49 62 48 63.5 L2 63.5 Q1 58 1.5 50 Z" fill="#e2462c"/>
<path d="M19.9 24.7 L32.7 24.7 L33 32.5 Q26 35 19.8 32.5Z" fill="#d43f27"/>
<path d="M8 52 Q25 47 44 52 L45 59 Q26 56 8 59Z" fill="#c53a24" opacity="0.5"/>
<path d="M11 55 Q14 52 17 56" stroke="#9a5a44" stroke-width="1.5" fill="none"/>
<path d="M11.5 24 L16.5 12 L18 36.5 Q12 37 11 33Z" fill="#161616"/>
<path d="M34 11 L39.5 19 Q42 30 41 38.5 L34.5 38.5Z" fill="#161616"/>
<ellipse cx="26" cy="16" rx="7.3" ry="9.5" fill="#ab7054"/>
<path d="M18.5 11 Q21 4.5 26.5 4.8 Q33 4.8 34 11 Q30 7.8 25.5 8.4 Q21 8.6 18.5 13Z" fill="#161616"/>
<path d="M22.3 20.6 Q26 22.8 29.7 20.6" stroke="#f3e6da" stroke-width="0.9" fill="none"/>
<circle cx="23" cy="14.8" r="0.7" fill="#2a1a14"/><circle cx="29" cy="14.8" r="0.7" fill="#2a1a14"/>
</svg>
<div class="t " style="left:97.00px;top:265.09px;font-size:8.4px;color:#34539a;font-weight:400;font-style:normal;font-family:'Liberation Sans',sans-serif;-webkit-text-stroke:0.1px #34539a"><span style="transform:scaleX(0.8670);">1 Introduction</span></div>
<div class="t b" style="left:97.00px;top:273.58px;font-size:6.4px;color:#202020;font-weight:400;font-style:normal;font-family:'Liberation Sans',sans-serif;"><span style="transform:scaleX(0.8500);word-spacing:1.642px;">Biologists agree that game-theoretic modalities are an interesting new topic in the field of ubiquitous</span></div>
<div class="t b" style="left:97.00px;top:280.68px;font-size:6.4px;color:#202020;font-weight:400;font-style:normal;font-family:'Liberation Sans',sans-serif;"><span style="transform:scaleX(0.8500);word-spacing:3.291px;">steganography, and researchers concur. This is a direct result of the construction of link-level</span></div>
<div class="t b" style="left:97.00px;top:287.78px;font-size:6.4px;color:#202020;font-weight:400;font-style:normal;font-family:'Liberation Sans',sans-serif;"><span style="transform:scaleX(0.8500);">acknowledgements.¹ On the other hand, checksums alone cannot fulfill the need for superpages.</span></div>
<div class="t b" style="left:97.00px;top:298.28px;font-size:6.4px;color:#202020;font-weight:400;font-style:normal;font-family:'Liberation Sans',sans-serif;"><span style="transform:scaleX(0.8500);word-spacing:1.327px;">Our focus in this work is not on whether the acclaimed highly-available algorithm for the emulation of</span></div>
<div class="t b" style="left:97.00px;top:305.38px;font-size:6.4px;color:#202020;font-weight:400;font-style:normal;font-family:'Liberation Sans',sans-serif;"><span style="transform:scaleX(0.8125);word-spacing:0.500px;">systems by Scott Shenker² is Turing complete, but rather on exploring a novel system for the simulation of the</span></div>
<div class="t b" style="left:97.00px;top:312.48px;font-size:6.4px;color:#202020;font-weight:400;font-style:normal;font-family:'Liberation Sans',sans-serif;"><span style="transform:scaleX(0.8500);word-spacing:0.955px;">transistor (Ounce). Indeed, suffix trees have a long history of cooperating in this manner⁴. Even though</span></div>
<div class="t b" style="left:97.00px;top:319.58px;font-size:6.4px;color:#202020;font-weight:400;font-style:normal;font-family:'Liberation Sans',sans-serif;"><span style="transform:scaleX(0.8500);word-spacing:0.756px;">conventional wisdom states that this challenge is generally answered by the improvement of B-trees, we</span></div>
<div class="t b" style="left:97.00px;top:326.68px;font-size:6.4px;color:#202020;font-weight:400;font-style:normal;font-family:'Liberation Sans',sans-serif;"><span style="transform:scaleX(0.8298);word-spacing:0.500px;">believe that a different method is necessary. The impact on software engineering of this technique has been</span></div>
<div class="t b" style="left:97.00px;top:333.78px;font-size:6.4px;color:#202020;font-weight:400;font-style:normal;font-family:'Liberation Sans',sans-serif;"><span style="transform:scaleX(0.8500);">well-received.</span></div>
<div class="t b" style="left:97.00px;top:344.28px;font-size:6.4px;color:#202020;font-weight:400;font-style:normal;font-family:'Liberation Sans',sans-serif;"><span style="transform:scaleX(0.8169);word-spacing:0.500px;">Physicists largely study the partition table in the place of ubiquitous communication. Such a hypothesis at first</span></div>
<div class="t b" style="left:97.00px;top:351.38px;font-size:6.4px;color:#202020;font-weight:400;font-style:normal;font-family:'Liberation Sans',sans-serif;"><span style="transform:scaleX(0.8255);word-spacing:0.500px;">glance seems unexpected but is buffeted by prior work in the field. Unfortunately, this solution is mostly well-</span></div>
<div class="t b" style="left:97.00px;top:358.48px;font-size:6.4px;color:#202020;font-weight:400;font-style:normal;font-family:'Liberation Sans',sans-serif;"><span style="transform:scaleX(0.8288);word-spacing:0.500px;">received. Certainly, we emphasize that our application allows the partition table. Unfortunately, this approach</span></div>
<div class="t b" style="left:97.00px;top:365.58px;font-size:6.4px;color:#202020;font-weight:400;font-style:normal;font-family:'Liberation Sans',sans-serif;"><span style="transform:scaleX(0.8500);word-spacing:1.306px;">is generally adamantly opposed. Despite the fact that similar systems synthesize the understanding of</span></div>
<div class="t b" style="left:97.00px;top:372.68px;font-size:6.4px;color:#202020;font-weight:400;font-style:normal;font-family:'Liberation Sans',sans-serif;"><span style="transform:scaleX(0.8367);word-spacing:0.500px;">forward-error correction, we realize this objective without analyzing the natural unification of DNS and suffix</span></div>
<div class="t b" style="left:97.00px;top:379.78px;font-size:6.4px;color:#202020;font-weight:400;font-style:normal;font-family:'Liberation Sans',sans-serif;"><span style="transform:scaleX(0.8500);">trees.</span></div>
<div class="t b" style="left:97.00px;top:390.28px;font-size:6.4px;color:#202020;font-weight:400;font-style:normal;font-family:'Liberation Sans',sans-serif;"><span style="transform:scaleX(0.8106);word-spacing:0.500px;">This work presents three advances above existing work. For starters, we use replicated theory to disprove that</span></div>
<div class="t b" style="left:97.00px;top:397.38px;font-size:6.4px;color:#202020;font-weight:400;font-style:normal;font-family:'Liberation Sans',sans-serif;"><span style="transform:scaleX(0.8483);word-spacing:0.500px;">DHTs and wide-area networks can collude to fulfill this intent. Along these same lines, we concentrate our</span></div>
<div class="t b" style="left:97.00px;top:404.48px;font-size:6.4px;color:#202020;font-weight:400;font-style:normal;font-family:'Liberation Sans',sans-serif;"><span style="transform:scaleX(0.8500);">efforts on arguing that write-ahead logging and suffix trees can cooperate to fulfill this ambition.²</span></div>
<div class="t b" style="left:97.00px;top:414.98px;font-size:6.4px;color:#202020;font-weight:400;font-style:normal;font-family:'Liberation Sans',sans-serif;"><span style="transform:scaleX(0.8500);word-spacing:0.552px;">The rest of the paper proceeds as follows. We motivate the need for write-ahead logging. To achieve this</span></div>
<div class="t b" style="left:97.00px;top:422.08px;font-size:6.4px;color:#202020;font-weight:400;font-style:normal;font-family:'Liberation Sans',sans-serif;"><span style="transform:scaleX(0.8158);word-spacing:0.500px;">objective, we disconfirm that model checking and IPv6 are continuously incompatible. Along these same lines,</span></div>
<div class="t b" style="left:97.00px;top:429.18px;font-size:6.4px;color:#202020;font-weight:400;font-style:normal;font-family:'Liberation Sans',sans-serif;"><span style="transform:scaleX(0.8500);word-spacing:0.609px;">we place our work in context with the existing work in this area. Furthermore, to overcome this issue, we</span></div>
<div class="t b" style="left:97.00px;top:436.28px;font-size:6.4px;color:#202020;font-weight:400;font-style:normal;font-family:'Liberation Sans',sans-serif;"><span style="transform:scaleX(0.8500);">better understand how flip-flop gates can be applied to the simulation of simulated annealing.</span></div>
<div class="t " style="left:427.00px;top:129.05px;font-size:6.5px;color:#8c8c8c;font-weight:400;font-style:normal;font-family:'Liberation Sans',sans-serif;"><span style="transform:scaleX(0.8631);">Multimodal, Stochastic Symmetries for E-Commerce</span></div>
<div class="t " style="left:427.00px;top:141.31px;font-size:9.2px;color:#34539a;font-weight:400;font-style:normal;font-family:'Liberation Sans',sans-serif;-webkit-text-stroke:0.1px #34539a"><span style="transform:scaleX(0.7579);">2 Principles</span></div>
<div class="t b" style="left:427.00px;top:149.88px;font-size:6.4px;color:#202020;font-weight:400;font-style:normal;font-family:'Liberation Sans',sans-serif;"><span style="transform:scaleX(0.8500);word-spacing:4.076px;">The properties of our methodology depend</span></div>
<div class="t b" style="left:427.00px;top:156.98px;font-size:6.4px;color:#202020;font-weight:400;font-style:normal;font-family:'Liberation Sans',sans-serif;"><span style="transform:scaleX(0.8282);word-spacing:0.500px;">greatly on the assumptions inherent in our design;</span></div>
<div class="t b" style="left:427.00px;top:164.08px;font-size:6.4px;color:#202020;font-weight:400;font-style:normal;font-family:'Liberation Sans',sans-serif;"><span style="transform:scaleX(0.8500);word-spacing:1.860px;">in this section, we outline those assumptions.³</span></div>
<div class="t b" style="left:427.00px;top:171.18px;font-size:6.4px;color:#202020;font-weight:400;font-style:normal;font-family:'Liberation Sans',sans-serif;"><span style="transform:scaleX(0.8414);word-spacing:0.500px;">Similarly, we assume that each component of our</span></div>
<div class="t b" style="left:427.00px;top:178.28px;font-size:6.4px;color:#202020;font-weight:400;font-style:normal;font-family:'Liberation Sans',sans-serif;"><span style="transform:scaleX(0.8355);word-spacing:0.500px;">heuristic emulates spreadsheets¹⁰, independent of</span></div>
<div class="t b" style="left:427.00px;top:185.38px;font-size:6.4px;color:#202020;font-weight:400;font-style:normal;font-family:'Liberation Sans',sans-serif;"><span style="transform:scaleX(0.8500);">all other components.</span></div>
<svg style="left:476.6px;top:191.2px" width="23.69999999999999" height="12.5" viewBox="0 0 23.69999999999999 12.5"><path d="M0 0H23.69999999999999V12.5H0Z" fill="#4472c4"/></svg>
<div class="t " style="left:476.60px;top:197.52px;font-size:4.9px;color:#fff;font-weight:400;font-style:normal;font-family:'Liberation Sans',sans-serif;width:23.69999999999999px;text-align:center"><span style="">Video</span></div>
<svg style="left:516.1px;top:191.2px" width="24.899999999999977" height="12.5" viewBox="0 0 24.899999999999977 12.5"><path d="M0 0H24.899999999999977V12.5H0Z" fill="#70ad47"/></svg>
<div class="t " style="left:516.10px;top:197.52px;font-size:4.9px;color:#fff;font-weight:400;font-style:normal;font-family:'Liberation Sans',sans-serif;width:24.899999999999977px;text-align:center"><span style="">Ounce</span></div>
<svg style="left:476.6px;top:214.9px" width="23.69999999999999" height="12.099999999999994" viewBox="0 0 23.69999999999999 12.099999999999994"><path d="M0 0H23.69999999999999V12.099999999999994H0Z" fill="#70ad47"/></svg>
<div class="t " style="left:476.60px;top:221.02px;font-size:4.9px;color:#fff;font-weight:400;font-style:normal;font-family:'Liberation Sans',sans-serif;width:23.69999999999999px;text-align:center"><span style="">JVM</span></div>
<svg style="left:435px;top:214.9px" width="23.80000000000001" height="12.099999999999994" viewBox="0 0 23.80000000000001 12.099999999999994"><path d="M0 0H23.80000000000001V12.099999999999994H0Z" fill="#ed7d31"/></svg>
<div class="t " style="left:435.00px;top:221.02px;font-size:4.9px;color:#fff;font-weight:400;font-style:normal;font-family:'Liberation Sans',sans-serif;width:23.80000000000001px;text-align:center"><span style="">Trap</span></div>
<svg style="left:420px;top:185px" width="140" height="60" viewBox="0 0 140 60">
<path d="M80.3 12.5H94" stroke="#6e6e6e" stroke-width="0.7" fill="none"/><path d="M96 12.5L93 11V14Z" fill="#6e6e6e"/>
<path d="M68.5 29.9V21" stroke="#6e6e6e" stroke-width="0.7" fill="none"/><path d="M68.5 19L67 22H70Z" fill="#6e6e6e"/>
<path d="M38.8 36H54.5" stroke="#6e6e6e" stroke-width="0.7" fill="none"/><path d="M56.6 36L53.6 34.5V37.5Z" fill="#6e6e6e"/>
<path d="M38.8 36H45.4V47.2H7V36H13" stroke="#6e6e6e" stroke-width="0.7" fill="none"/><path d="M15 36L12 34.5V37.5Z" fill="#6e6e6e"/>
</svg>
<div class="t " style="left:441.50px;top:244.82px;font-size:6.3px;color:#333;font-weight:400;font-style:normal;font-family:'Liberation Sans',sans-serif;"><span style="transform:scaleX(0.8442);">Figure 1:  The flowchart used by Ounce</span></div>
<div class="t b" style="left:427.00px;top:260.18px;font-size:6.4px;color:#202020;font-weight:400;font-style:normal;font-family:'Liberation Sans',sans-serif;"><span style="transform:scaleX(0.8364);word-spacing:0.500px;">Next, we estimate that each component of Ounce</span></div>
<div class="t b" style="left:427.00px;top:267.28px;font-size:6.4px;color:#202020;font-weight:400;font-style:normal;font-family:'Liberation Sans',sans-serif;"><span style="transform:scaleX(0.8500);word-spacing:1.927px;">provides pseudorandom theory, independent of</span></div>
<div class="t b" style="left:427.00px;top:274.38px;font-size:6.4px;color:#202020;font-weight:400;font-style:normal;font-family:'Liberation Sans',sans-serif;"><span style="transform:scaleX(0.8500);word-spacing:2.173px;">all other components. We postulate that each</span></div>
<div class="t b" style="left:427.00px;top:281.48px;font-size:6.4px;color:#202020;font-weight:400;font-style:normal;font-family:'Liberation Sans',sans-serif;"><span style="transform:scaleX(0.8500);word-spacing:0.760px;">component of our method enables voice-over-IP,</span></div>
<div class="t b" style="left:427.00px;top:288.58px;font-size:6.4px;color:#202020;font-weight:400;font-style:normal;font-family:'Liberation Sans',sans-serif;"><span style="transform:scaleX(0.8500);word-spacing:1.507px;">independent of all other components. This is a</span></div>
<div class="t b" style="left:427.00px;top:295.68px;font-size:6.4px;color:#202020;font-weight:400;font-style:normal;font-family:'Liberation Sans',sans-serif;"><span style="transform:scaleX(0.8500);word-spacing:0.618px;">confirmed property of Ounce. Despite the results</span></div>
<div class="t b" style="left:427.00px;top:302.78px;font-size:6.4px;color:#202020;font-weight:400;font-style:normal;font-family:'Liberation Sans',sans-serif;"><span style="transform:scaleX(0.8500);word-spacing:4.532px;">by V. Wilson et al., we can argue that</span></div>
<div class="t b" style="left:427.00px;top:309.88px;font-size:6.4px;color:#202020;font-weight:400;font-style:normal;font-family:'Liberation Sans',sans-serif;"><span style="transform:scaleX(0.8500);word-spacing:4.688px;">rasterization¹⁵ and SCSI disks are usually</span></div>
<div class="t b" style="left:427.00px;top:316.98px;font-size:6.4px;color:#202020;font-weight:400;font-style:normal;font-family:'Liberation Sans',sans-serif;"><span style="transform:scaleX(0.8310);word-spacing:0.500px;">incompatible. We believe that SMPs can be made</span></div>
<div class="t b" style="left:427.00px;top:324.08px;font-size:6.4px;color:#202020;font-weight:400;font-style:normal;font-family:'Liberation Sans',sans-serif;"><span style="transform:scaleX(0.8500);">classical, autonomous, and interactive.</span></div>
<svg style="left:435.6px;top:335.5px" width="20.69999999999999" height="19.5" viewBox="0 0 20.69999999999999 19.5"><path d="M0 0H20.69999999999999V12.09L10.349999999999994 19.5L0 12.09Z" fill="#4472c4"/></svg>
<div class="t " style="left:435.60px;top:342.58px;font-size:4.7px;color:#fff;font-weight:400;font-style:normal;font-family:'Liberation Sans',sans-serif;width:20.69999999999999px;text-align:center"><span style="">Gateway</span></div>
<svg style="left:435.6px;top:365.5px" width="20.69999999999999" height="18.30000000000001" viewBox="0 0 20.69999999999999 18.30000000000001"><path d="M0 0H20.69999999999999V11.346000000000007L10.349999999999994 18.30000000000001L0 11.346000000000007Z" fill="#ed7d31"/></svg>
<div class="t " style="left:435.60px;top:372.15px;font-size:4.7px;color:#fff;font-weight:400;font-style:normal;font-family:'Liberation Sans',sans-serif;width:20.69999999999999px;text-align:center"><span style="">Strobe</span></div>
<div class="t " style="left:435.60px;top:377.64px;font-size:4.7px;color:#fff;font-weight:400;font-style:normal;font-family:'Liberation Sans',sans-serif;width:20.69999999999999px;text-align:center"><span style="">A</span></div>
<svg style="left:427.4px;top:396px" width="37.10000000000002" height="14" viewBox="0 0 37.10000000000002 14"><path d="M0 0H37.10000000000002V14H0Z" fill="#4472c4"/></svg>
<div class="t " style="left:427.40px;top:403.06px;font-size:4.7px;color:#fff;font-weight:400;font-style:normal;font-family:'Liberation Sans',sans-serif;width:37.10000000000002px;text-align:center"><span style="">Mean Rocks</span></div>
<svg style="left:427.4px;top:421.4px" width="37.10000000000002" height="12.300000000000011" viewBox="0 0 37.10000000000002 12.300000000000011"><path d="M0 0H37.10000000000002V12.300000000000011H0Z" fill="#4472c4"/></svg>
<div class="t " style="left:427.40px;top:427.61px;font-size:4.7px;color:#fff;font-weight:400;font-style:normal;font-family:'Liberation Sans',sans-serif;width:37.10000000000002px;text-align:center"><span style="">Parallel</span></div>
<svg style="left:474px;top:396px" width="32.80000000000001" height="14" viewBox="0 0 32.80000000000001 14"><path d="M0 0H32.80000000000001V14H0Z" fill="#4472c4"/></svg>
<div class="t " style="left:474.00px;top:403.06px;font-size:4.7px;color:#fff;font-weight:400;font-style:normal;font-family:'Liberation Sans',sans-serif;width:32.80000000000001px;text-align:center"><span style="">DNS Move</span></div>
<svg style="left:515.5px;top:396px" width="32.0" height="14" viewBox="0 0 32.0 14"><path d="M4.8999999999999995 0H27.1L32.0 7.0L27.1 14H4.8999999999999995L0 7.0Z" fill="#4472c4"/></svg>
<div class="t " style="left:515.50px;top:403.06px;font-size:4.7px;color:#fff;font-weight:400;font-style:normal;font-family:'Liberation Sans',sans-serif;width:32.0px;text-align:center"><span style="">ParadoxD</span></div>
<svg style="left:474px;top:364px" width="32.80000000000001" height="14.600000000000023" viewBox="0 0 32.80000000000001 14.600000000000023"><path d="M0 0H32.80000000000001V14.600000000000023H0Z" fill="#70ad47"/></svg>
<div class="t " style="left:474.00px;top:371.36px;font-size:4.7px;color:#fff;font-weight:400;font-style:normal;font-family:'Liberation Sans',sans-serif;width:32.80000000000001px;text-align:center"><span style="">Ounce Node</span></div>
<svg style="left:515px;top:364px" width="32.5" height="14.600000000000023" viewBox="0 0 32.5 14.600000000000023"><path d="M0 0H32.5V14.600000000000023H0Z" fill="#4472c4"/></svg>
<div class="t " style="left:515.00px;top:371.36px;font-size:4.7px;color:#fff;font-weight:400;font-style:normal;font-family:'Liberation Sans',sans-serif;width:32.5px;text-align:center"><span style="">Morse Unit</span></div>
<svg style="left:496.4px;top:335.5px" width="27.899999999999977" height="14.100000000000023" viewBox="0 0 27.899999999999977 14.100000000000023"><path d="M0 0H27.899999999999977V14.100000000000023H0Z" fill="#4472c4"/></svg>
<div class="t " style="left:496.40px;top:342.61px;font-size:4.7px;color:#fff;font-weight:400;font-style:normal;font-family:'Liberation Sans',sans-serif;width:27.899999999999977px;text-align:center"><span style="">Web</span></div>
<svg style="left:420px;top:330px" width="140" height="110" viewBox="0 0 140 110">
<path d="M26 25V33.5" stroke="#6e6e6e" stroke-width="0.6" fill="none"/><path d="M26 35.5L24.8 33H27.2Z" fill="#6e6e6e"/>
<path d="M26 53.8V63.8" stroke="#6e6e6e" stroke-width="0.6" fill="none"/><path d="M26 65.8L24.8 63.3H27.2Z" fill="#6e6e6e"/>
<path d="M26 80V89.2" stroke="#6e6e6e" stroke-width="0.6" fill="none"/><path d="M26 91.2L24.8 88.7H27.2Z" fill="#6e6e6e"/>
<path d="M44.5 73H52" stroke="#6e6e6e" stroke-width="0.6" fill="none"/><path d="M54 73L51.5 71.8V74.2Z" fill="#6e6e6e"/>
<path d="M86.8 73H93.5" stroke="#6e6e6e" stroke-width="0.6" fill="none"/><path d="M95.5 73L93 71.8V74.2Z" fill="#6e6e6e"/>
<path d="M70.4 66V50.5" stroke="#6e6e6e" stroke-width="0.6" fill="none"/><path d="M70.4 48.6L69.2 51.1H71.6Z" fill="#6e6e6e"/>
<path d="M111.2 66V50.5" stroke="#6e6e6e" stroke-width="0.6" fill="none"/><path d="M111.2 48.6L110 51.1H112.4Z" fill="#6e6e6e"/>
<path d="M70.4 34V27.3H111.2V34M90.3 27.3V21.5" stroke="#6e6e6e" stroke-width="0.6" fill="none"/><path d="M90.3 19.6L89.1 22.1H91.5Z" fill="#6e6e6e"/>
</svg>
<div class="t " style="left:432.30px;top:447.85px;font-size:6.2px;color:#333;font-weight:400;font-style:normal;font-family:'Liberation Sans',sans-serif;"><span style="transform:scaleX(0.8588);">Figure 2: The relationship between Ounce and</span></div>
<div class="t " style="left:460.50px;top:455.05px;font-size:6.2px;color:#333;font-weight:400;font-style:normal;font-family:'Liberation Sans',sans-serif;"><span style="transform:scaleX(0.8640);">reliable methodologies</span></div>
<div class="t " style="left:565.80px;top:141.31px;font-size:9.2px;color:#34539a;font-weight:400;font-style:normal;font-family:'Liberation Sans',sans-serif;-webkit-text-stroke:0.1px #34539a"><span style="transform:scaleX(0.8030);">3 Implementation</span></div>
<div class="t b" style="left:566.00px;top:149.78px;font-size:6.4px;color:#202020;font-weight:400;font-style:normal;font-family:'Liberation Sans',sans-serif;"><span style="transform:scaleX(0.8500);word-spacing:4.739px;">Ounce is elegant; so, too, must be our</span></div>
<div class="t b" style="left:566.00px;top:156.78px;font-size:6.4px;color:#202020;font-weight:400;font-style:normal;font-family:'Liberation Sans',sans-serif;"><span style="transform:scaleX(0.8500);word-spacing:1.548px;">implementation. Similarly, the collection of shell</span></div>
<div class="t b" style="left:566.00px;top:163.78px;font-size:6.4px;color:#202020;font-weight:400;font-style:normal;font-family:'Liberation Sans',sans-serif;"><span style="transform:scaleX(0.8500);word-spacing:0.596px;">scripts and the server daemon must run with the</span></div>
<div class="t b" style="left:566.00px;top:170.78px;font-size:6.4px;color:#202020;font-weight:400;font-style:normal;font-family:'Liberation Sans',sans-serif;"><span style="transform:scaleX(0.8500);word-spacing:2.592px;">same permissions. Next, Ounce requires root</span></div>
<div class="t b" style="left:566.00px;top:177.78px;font-size:6.4px;color:#202020;font-weight:400;font-style:normal;font-family:'Liberation Sans',sans-serif;"><span style="transform:scaleX(0.8500);word-spacing:1.862px;">access in order to cache the lookaside buffer.</span></div>
<div class="t b" style="left:566.00px;top:184.78px;font-size:6.4px;color:#202020;font-weight:400;font-style:normal;font-family:'Liberation Sans',sans-serif;"><span style="transform:scaleX(0.8231);word-spacing:0.500px;">Hackers worldwide have complete control over the</span></div>
<div class="t b" style="left:566.00px;top:191.78px;font-size:6.4px;color:#202020;font-weight:400;font-style:normal;font-family:'Liberation Sans',sans-serif;"><span style="transform:scaleX(0.8290);word-spacing:0.500px;">client-side library, which of course is necessary so</span></div>
<div class="t b" style="left:566.00px;top:198.78px;font-size:6.4px;color:#202020;font-weight:400;font-style:normal;font-family:'Liberation Sans',sans-serif;"><span style="transform:scaleX(0.8372);word-spacing:0.500px;">that architecture can be made compact, constant-</span></div>
<div class="t b" style="left:566.00px;top:205.78px;font-size:6.4px;color:#202020;font-weight:400;font-style:normal;font-family:'Liberation Sans',sans-serif;"><span style="transform:scaleX(0.8401);word-spacing:0.500px;">time, and certifiable. The server daemon contains</span></div>
<div class="t b" style="left:566.00px;top:212.78px;font-size:6.4px;color:#202020;font-weight:400;font-style:normal;font-family:'Liberation Sans',sans-serif;"><span style="transform:scaleX(0.8500);word-spacing:2.677px;">about 68 instructions of Fortran. We plan to</span></div>
<div class="t b" style="left:566.00px;top:219.78px;font-size:6.4px;color:#202020;font-weight:400;font-style:normal;font-family:'Liberation Sans',sans-serif;"><span style="transform:scaleX(0.8500);word-spacing:1.898px;">release all of this code under copy-once, run-</span></div>
<div class="t b" style="left:566.00px;top:226.78px;font-size:6.4px;color:#202020;font-weight:400;font-style:normal;font-family:'Liberation Sans',sans-serif;"><span style="transform:scaleX(0.8500);">nowhere⁵.</span></div>
<div class="t " style="left:565.80px;top:242.01px;font-size:9.2px;color:#34539a;font-weight:400;font-style:normal;font-family:'Liberation Sans',sans-serif;-webkit-text-stroke:0.1px #34539a"><span style="transform:scaleX(0.8106);">4 Evaluation</span></div>
<div class="t b" style="left:566.00px;top:250.78px;font-size:6.4px;color:#202020;font-weight:400;font-style:normal;font-family:'Liberation Sans',sans-serif;"><span style="transform:scaleX(0.8500);word-spacing:3.063px;">We now discuss our evaluation. Our overall</span></div>
<div class="t b" style="left:566.00px;top:257.78px;font-size:6.4px;color:#202020;font-weight:400;font-style:normal;font-family:'Liberation Sans',sans-serif;"><span style="transform:scaleX(0.8500);">evaluation seeks to prove three hypotheses:</span></div>
<svg style="left:575.5px;top:269.09999999999997px" width="3" height="3" viewBox="0 0 3 3"><circle cx="1.5" cy="1.5" r="1.05" fill="none" stroke="#333" stroke-width="0.6"/></svg>
<div class="t b" style="left:585.00px;top:269.48px;font-size:6.4px;color:#202020;font-weight:400;font-style:normal;font-family:'Liberation Sans',sans-serif;"><span style="transform:scaleX(0.8500);word-spacing:3.515px;">that the Macintosh SE of yesteryear</span></div>
<div class="t b" style="left:585.00px;top:276.53px;font-size:6.4px;color:#202020;font-weight:400;font-style:normal;font-family:'Liberation Sans',sans-serif;"><span style="transform:scaleX(0.8500);word-spacing:1.225px;">actually exhibits better effective interrupt</span></div>
<div class="t b" style="left:585.00px;top:283.58px;font-size:6.4px;color:#202020;font-weight:400;font-style:normal;font-family:'Liberation Sans',sans-serif;"><span style="transform:scaleX(0.8500);">rate than today’s hardware;</span></div>
<svg style="left:575.5px;top:290.25px" width="3" height="3" viewBox="0 0 3 3"><circle cx="1.5" cy="1.5" r="1.05" fill="none" stroke="#333" stroke-width="0.6"/></svg>
<div class="t b" style="left:585.00px;top:290.63px;font-size:6.4px;color:#202020;font-weight:400;font-style:normal;font-family:'Liberation Sans',sans-serif;"><span style="transform:scaleX(0.8396);word-spacing:0.500px;">that we can do much to affect a method’s</span></div>
<div class="t b" style="left:585.00px;top:297.68px;font-size:6.4px;color:#202020;font-weight:400;font-style:normal;font-family:'Liberation Sans',sans-serif;"><span style="transform:scaleX(0.8500);">median response time;</span></div>
<svg style="left:575.5px;top:304.35px" width="3" height="3" viewBox="0 0 3 3"><circle cx="1.5" cy="1.5" r="1.05" fill="none" stroke="#333" stroke-width="0.6"/></svg>
<div class="t b" style="left:585.00px;top:304.73px;font-size:6.4px;color:#202020;font-weight:400;font-style:normal;font-family:'Liberation Sans',sans-serif;"><span style="transform:scaleX(0.8500);word-spacing:4.600px;">that voice-over-IP no longer adjusts</span></div>
<div class="t b" style="left:585.00px;top:311.78px;font-size:6.4px;color:#202020;font-weight:400;font-style:normal;font-family:'Liberation Sans',sans-serif;"><span style="transform:scaleX(0.8500);">effective throughput.</span></div>
<div class="t " style="left:566.00px;top:322.78px;font-size:6.4px;color:#202020;font-weight:400;font-style:normal;font-family:'Liberation Sans',sans-serif;"><span style="transform:scaleX(0.8500);">We ran four novel experiments:</span></div>
<div class="t " style="left:575.50px;top:333.68px;font-size:6.4px;color:#202020;font-weight:400;font-style:normal;font-family:'Liberation Sans',sans-serif;"><span style="transform:scaleX(0.8500);">1.</span></div>
<div class="t b" style="left:585.00px;top:333.68px;font-size:6.4px;color:#202020;font-weight:400;font-style:normal;font-family:'Liberation Sans',sans-serif;"><span style="transform:scaleX(0.8500);word-spacing:3.127px;">We measured hard disk space as a</span></div>
<div class="t b" style="left:585.00px;top:340.75px;font-size:6.4px;color:#202020;font-weight:400;font-style:normal;font-family:'Liberation Sans',sans-serif;"><span style="transform:scaleX(0.8381);word-spacing:0.500px;">function of USB key space on an IBM PC</span></div>
<div class="t b" style="left:585.00px;top:347.82px;font-size:6.4px;color:#202020;font-weight:400;font-style:normal;font-family:'Liberation Sans',sans-serif;"><span style="transform:scaleX(0.8500);">Junior.</span></div>
<div class="t " style="left:575.50px;top:354.89px;font-size:6.4px;color:#202020;font-weight:400;font-style:normal;font-family:'Liberation Sans',sans-serif;"><span style="transform:scaleX(0.8500);">2.</span></div>
<div class="t b" style="left:585.00px;top:354.89px;font-size:6.4px;color:#202020;font-weight:400;font-style:normal;font-family:'Liberation Sans',sans-serif;"><span style="transform:scaleX(0.8500);word-spacing:0.696px;">We compared average response time on</span></div>
<div class="t b" style="left:585.00px;top:361.96px;font-size:6.4px;color:#202020;font-weight:400;font-style:normal;font-family:'Liberation Sans',sans-serif;"><span style="transform:scaleX(0.8500);word-spacing:1.174px;">the Microsoft Windows NT, NetBSD and</span></div>
<div class="t b" style="left:585.00px;top:369.03px;font-size:6.4px;color:#202020;font-weight:400;font-style:normal;font-family:'Liberation Sans',sans-serif;"><span style="transform:scaleX(0.8500);">AT&amp;T System V operating systems.</span></div>
<div class="t " style="left:575.50px;top:376.10px;font-size:6.4px;color:#202020;font-weight:400;font-style:normal;font-family:'Liberation Sans',sans-serif;"><span style="transform:scaleX(0.8500);">3.</span></div>
<div class="t b" style="left:585.00px;top:376.10px;font-size:6.4px;color:#202020;font-weight:400;font-style:normal;font-family:'Liberation Sans',sans-serif;"><span style="transform:scaleX(0.8500);word-spacing:2.118px;">We asked (and answered) what would</span></div>
<div class="t b" style="left:585.00px;top:383.17px;font-size:6.4px;color:#202020;font-weight:400;font-style:normal;font-family:'Liberation Sans',sans-serif;"><span style="transform:scaleX(0.8500);word-spacing:12.373px;">happen if provably extremely</span></div>
<div class="t b" style="left:585.00px;top:390.24px;font-size:6.4px;color:#202020;font-weight:400;font-style:normal;font-family:'Liberation Sans',sans-serif;"><span style="transform:scaleX(0.8500);word-spacing:6.129px;">independently parallel 802.11 mesh</span></div>
<div class="t b" style="left:585.00px;top:397.31px;font-size:6.4px;color:#202020;font-weight:400;font-style:normal;font-family:'Liberation Sans',sans-serif;"><span style="transform:scaleX(0.8500);word-spacing:1.668px;">networks were used instead of vacuum</span></div>
<div class="t b" style="left:585.00px;top:404.38px;font-size:6.4px;color:#202020;font-weight:400;font-style:normal;font-family:'Liberation Sans',sans-serif;"><span style="transform:scaleX(0.8500);">tubes.</span></div>
<div class="t " style="left:575.50px;top:411.45px;font-size:6.4px;color:#202020;font-weight:400;font-style:normal;font-family:'Liberation Sans',sans-serif;"><span style="transform:scaleX(0.8500);">4.</span></div>
<div class="t b" style="left:585.00px;top:411.45px;font-size:6.4px;color:#202020;font-weight:400;font-style:normal;font-family:'Liberation Sans',sans-serif;"><span style="transform:scaleX(0.8500);word-spacing:4.671px;">We dogfooded Ounce on our own</span></div>
<div class="t b" style="left:585.00px;top:418.52px;font-size:6.4px;color:#202020;font-weight:400;font-style:normal;font-family:'Liberation Sans',sans-serif;"><span style="transform:scaleX(0.8500);word-spacing:5.623px;">desktop machines, paying particular</span></div>
<div class="t b" style="left:585.00px;top:425.59px;font-size:6.4px;color:#202020;font-weight:400;font-style:normal;font-family:'Liberation Sans',sans-serif;"><span style="transform:scaleX(0.8500);">attention to floppy disk speed.</span></div>
<div class="t b" style="left:566.00px;top:435.98px;font-size:6.4px;color:#202020;font-weight:400;font-style:normal;font-family:'Liberation Sans',sans-serif;"><span style="transform:scaleX(0.8500);word-spacing:0.639px;">Afterwards, we discuss all four experiments. The</span></div>
<div class="t b" style="left:566.00px;top:443.10px;font-size:6.4px;color:#202020;font-weight:400;font-style:normal;font-family:'Liberation Sans',sans-serif;"><span style="transform:scaleX(0.8500);word-spacing:1.998px;">obtained results prove that four years of hard</span></div>
<div class="t b" style="left:566.00px;top:450.22px;font-size:6.4px;color:#202020;font-weight:400;font-style:normal;font-family:'Liberation Sans',sans-serif;"><span style="transform:scaleX(0.8500);word-spacing:2.155px;">work were wasted on this project. Our power</span></div>
<div class="t b" style="left:566.00px;top:457.34px;font-size:6.4px;color:#202020;font-weight:400;font-style:normal;font-family:'Liberation Sans',sans-serif;"><span style="transform:scaleX(0.8500);word-spacing:2.331px;">observations contrast to those seen in earlier</span></div>
<div style="left:4px;top:460.3px;width:741.5px;height:11.3px;background:#484848"></div>
<div style="left:4px;top:460.3px;width:741.5px;height:0.8px;background:#5c5c5c"></div>
<div class="t " style="left:7.00px;top:466.82px;font-size:6.3px;color:#c8c8c8;font-weight:400;font-style:normal;font-family:'Liberation Sans',sans-serif;"><span style="transform:scaleX(0.8151);">PAGE 1 OF 3</span></div>
<div class="t " style="left:45.00px;top:466.82px;font-size:6.3px;color:#c8c8c8;font-weight:400;font-style:normal;font-family:'Liberation Sans',sans-serif;"><span style="transform:scaleX(0.7966);">788 WORDS</span></div>
<div class="t " style="left:654.00px;top:466.94px;font-size:6.8px;color:#b8b8b8;font-weight:400;font-style:normal;font-family:'Liberation Sans',sans-serif;"><span style="transform:scaleX(0.9185);">80%</span></div>
<svg style="left:667px;top:463px" width="6" height="6" viewBox="0 0 6 6"><circle cx="3" cy="3" r="2.7" fill="#bdbdbd"/><rect x="1.4" y="2.6" width="3.2" height="0.8" fill="#484848"/></svg>
<svg style="left:737.5px;top:463px" width="6" height="6" viewBox="0 0 6 6"><circle cx="3" cy="3" r="2.7" fill="#bdbdbd"/><rect x="1.4" y="2.6" width="3.2" height="0.8" fill="#484848"/><rect x="2.6" y="1.4" width="0.8" height="3.2" fill="#484848"/></svg>
<div style="left:675.6px;top:465.7px;width:57.4px;height:0.8px;background:#b0b0b0"></div>
<div style="left:675.6px;top:465.3px;width:23px;height:1.5px;background:#2f6fd6"></div>
<svg style="left:695px;top:462.2px" width="8" height="8" viewBox="0 0 8 8"><circle cx="4" cy="4" r="2.8" fill="#2f6fd6"/></svg>
<svg style="left:701.5px;top:464px" width="4" height="4" viewBox="0 0 4 4"><path d="M0 2L2 0H4V4H2Z" fill="#c8c8c8"/></svg>
</body></html>
